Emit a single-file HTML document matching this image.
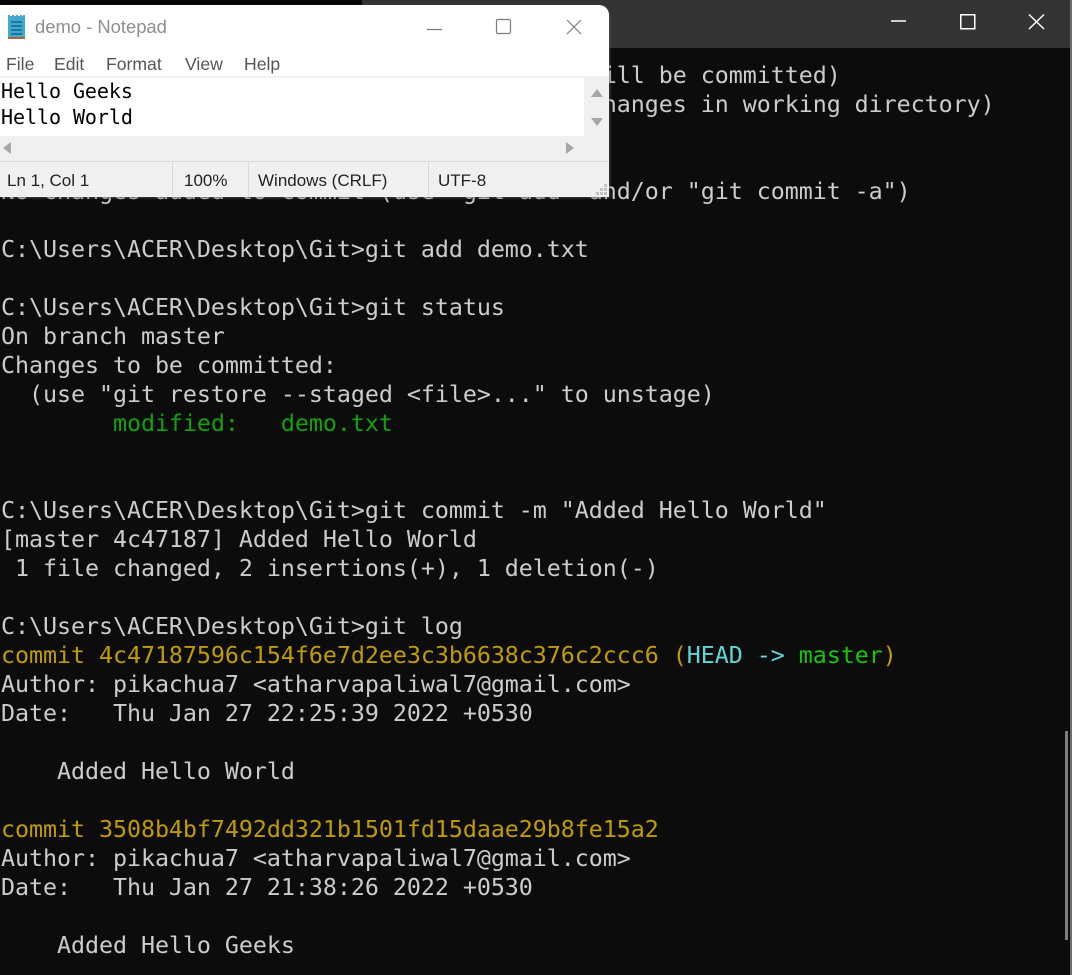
<!DOCTYPE html>
<html><head><meta charset="utf-8"><style>
html,body{margin:0;padding:0;background:#0c0c0c}
#r{position:relative;width:1072px;height:975px;overflow:hidden;background:#0c0c0c}
.l{position:absolute;left:1px;height:29px;margin-top:1px;font:23.33px/29px "DejaVu Sans Mono","Liberation Mono",monospace;letter-spacing:-.05px;color:#cccccc;white-space:pre}
.a{position:absolute}
.n{position:absolute;font:17.6px/22px "Liberation Sans",sans-serif;color:#3c3c3c;white-space:pre}
.s{position:absolute;top:165px;font:17px/22px "Liberation Sans",sans-serif;color:#222;white-space:pre}
.m{position:absolute;left:1px;font:20px/26px "DejaVu Sans Mono","Liberation Mono",monospace;letter-spacing:-.05px;color:#000;white-space:pre}
</style></head><body><div id="r">
<div class="a" style="left:0;top:0;width:1072px;height:48px;background:#343434"></div>
<div class="a" style="left:0;top:0;width:362px;height:5px;background:#050505"></div>
<div class="a" style="left:1070px;top:0;width:2px;height:975px;background:#6e6e6e"></div>
<svg class="a" style="left:880px;top:0" width="180" height="48" fill="none" stroke="#fff" stroke-width="1.5"><path d="M11 21H26"/><rect x="80.75" y="14.75" width="14" height="14"/><path d="M149 14.5L164 29M164 14.5L149 29"/></svg>
<div class="a" style="left:1065px;top:731px;width:3px;height:209px;background:#7e7e7e"></div>

<div class="l" style="top:60px">                                           ill be committed)</div>
<div class="l" style="top:89px">                                           hanges in working directory)</div>
<div class="l" style="top:176px">No changes added to commit (use "git add" and/or "git commit -a")</div>
<div class="l" style="top:234px">C:\Users\ACER\Desktop\Git&gt;git add demo.txt</div>
<div class="l" style="top:292px">C:\Users\ACER\Desktop\Git&gt;git status</div>
<div class="l" style="top:321px">On branch master</div>
<div class="l" style="top:350px">Changes to be committed:</div>
<div class="l" style="top:379px">  (use "git restore --staged &lt;file&gt;..." to unstage)</div>
<div class="l" style="top:408px;color:#13a10e">        modified:   demo.txt</div>
<div class="l" style="top:495px">C:\Users\ACER\Desktop\Git&gt;git commit -m "Added Hello World"</div>
<div class="l" style="top:524px">[master 4c47187] Added Hello World</div>
<div class="l" style="top:553px"> 1 file changed, 2 insertions(+), 1 deletion(-)</div>
<div class="l" style="top:611px">C:\Users\ACER\Desktop\Git&gt;git log</div>
<div class="l" style="top:640px;color:#c19c00">commit 4c47187596c154f6e7d2ee3c3b6638c376c2ccc6 (<span style="color:#61d6d6">HEAD -&gt; </span><span style="color:#16c60c">master</span>)</div>
<div class="l" style="top:669px">Author: pikachua7 &lt;atharvapaliwal7@gmail.com&gt;</div>
<div class="l" style="top:698px">Date:   Thu Jan 27 22:25:39 2022 +0530</div>
<div class="l" style="top:756px">    Added Hello World</div>
<div class="l" style="top:814px;color:#c19c00">commit 3508b4bf7492dd321b1501fd15daae29b8fe15a2</div>
<div class="l" style="top:843px">Author: pikachua7 &lt;atharvapaliwal7@gmail.com&gt;</div>
<div class="l" style="top:872px">Date:   Thu Jan 27 21:38:26 2022 +0530</div>
<div class="l" style="top:930px">    Added Hello Geeks</div>

<div class="a" style="left:0;top:5px;width:609px;height:192px;background:#fff;border-radius:0 10px 0 0;box-shadow:1px 1px 2px rgba(90,90,90,.7);overflow:hidden">
  <svg class="a" style="left:7px;top:8px" width="22" height="30"><rect x="1" y="3" width="17" height="22" fill="#3fa9cf"/><rect x="1" y="24" width="17" height="2" fill="#a8683a"/><path d="M2 2V4M6 2V4M10 2V4M14 2V4M17 2V4" stroke="#5a9fbd" stroke-width="2"/><path d="M4 9H15M4 13H15M4 17H15M4 21H15" stroke="#14658a" stroke-width="1.6"/></svg>
  <div class="n" style="left:35px;top:11px;font-size:18.4px;color:#8e8e8e">demo - Notepad</div>
  <svg class="a" style="left:420px;top:8px" width="180" height="28" fill="none" stroke="#7c7c7c" stroke-width="1.2"><path d="M7 16.5H22"/><rect x="76.5" y="6.5" width="14" height="14" rx="1.5"/><path d="M147 7L161 21M161 7L147 21"/></svg>
  <div class="n" style="left:6px;top:48px;color:#555">File</div>
  <div class="n" style="left:54px;top:48px;color:#555">Edit</div>
  <div class="n" style="left:106px;top:48px;color:#555">Format</div>
  <div class="n" style="left:185px;top:48px;color:#555">View</div>
  <div class="n" style="left:244px;top:48px;color:#555">Help</div>
  <div class="a" style="left:0;top:71px;width:609px;height:121px;background:#f0f0f0"></div>
  <div class="a" style="left:0;top:73px;width:584px;height:58px;background:#fff"></div>
  <div class="m" style="top:73px">Hello Geeks</div>
  <div class="m" style="top:99px">Hello World</div>
  <svg class="a" style="left:0;top:71px" width="609" height="90" fill="#a6a6a6"><path d="M591 21L597 13L603 21Z"/><path d="M591 42L603 42L597 50Z"/><path d="M3 72L11 66V78Z"/><path d="M566 66L574 72L566 78Z"/></svg>
  <div class="a" style="left:0;top:156px;width:609px;height:1px;background:#d9d9d9"></div>
  <div class="a" style="left:172px;top:157px;width:1px;height:35px;background:#d9d9d9"></div>
  <div class="a" style="left:248px;top:157px;width:1px;height:35px;background:#d9d9d9"></div>
  <div class="a" style="left:428px;top:157px;width:1px;height:35px;background:#d9d9d9"></div>
  <div class="s" style="left:7px">Ln 1, Col 1</div>
  <div class="s" style="left:184px">100%</div>
  <div class="s" style="left:258px">Windows (CRLF)</div>
  <div class="s" style="left:438px">UTF-8</div>
  <svg class="a" style="left:596px;top:179px" width="12" height="12" fill="#c4c4c4"><rect x="8" y="0" width="3" height="3"/><rect x="4" y="4" width="3" height="3"/><rect x="8" y="4" width="3" height="3"/><rect x="0" y="8" width="3" height="3"/><rect x="4" y="8" width="3" height="3"/><rect x="8" y="8" width="3" height="3"/></svg>
</div>
</div></body></html>
